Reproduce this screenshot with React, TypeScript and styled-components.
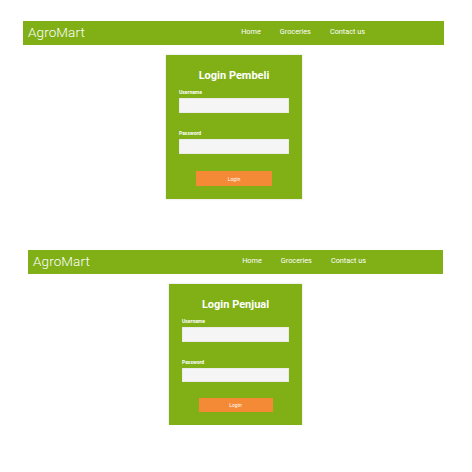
import React from 'react'
import styled, { createGlobalStyle } from 'styled-components'

const GlobalStyle = createGlobalStyle`
  html, body {
    margin: 0;
    padding: 0;
    background: #ffffff;
    font-family: Roboto, "Liberation Sans", sans-serif;
  }
`

const Page = styled.div`
  display: flex;
  flex-direction: column;
  padding-top: 21px;
`

const Section = styled.section<{ offset: number; navWidth: number }>`
  display: flex;
  flex-direction: column;
  margin-left: ${({ offset }) => offset}px;
  width: ${({ navWidth }) => navWidth}px;
  & + & {
    margin-top: 51px;
  }
`

const Nav = styled.nav`
  display: flex;
  align-items: center;
  height: 24px;
  background-color: #80b016;
  padding-left: 5px;
`

const Brand = styled.div`
  color: #ffffff;
  font-size: 13.5px;
  font-weight: 300;
  letter-spacing: 0.1px;
  margin-bottom: 2px;
`

const Links = styled.ul<{ right: number }>`
  display: flex;
  gap: 19px;
  list-style: none;
  margin: 0 ${({ right }) => right}px 4px auto;
  padding: 0;
`

const LinkItem = styled.li`
  color: #ffffff;
  font-size: 7.3px;
  font-weight: 400;
`

const Card = styled.form<{ width: number; indent: number }>`
  display: flex;
  flex-direction: column;
  width: ${({ width }) => width}px;
  margin: 10px 0 0 ${({ indent }) => indent}px;
  padding: 14px 13px 13px;
  box-sizing: border-box;
  background-color: #80b016;
  box-shadow: 0 0 2px rgba(0, 0, 0, 0.18);
`

const Title = styled.h2`
  margin: 0 0 6px;
  text-align: center;
  color: #ffffff;
  font-family: Roboto, "Liberation Sans", sans-serif;
  font-size: 11px;
  line-height: 14px;
  font-weight: 700;
`

const Field = styled.div`
  display: flex;
  flex-direction: column;
  & + & {
    margin-top: 17px;
  }
`

const Label = styled.label`
  color: #ffffff;
  font-size: 5px;
  line-height: 6px;
  font-weight: 700;
  margin-bottom: 3px;
`

const Input = styled.input<{ tight: boolean }>`
  height: ${({ tight }) => (tight ? 14.5 : 15)}px;
  border: none;
  padding: 0;
  background-color: #f5f5f5;
  box-shadow: inset 0 0 0 0.5px rgba(0, 0, 0, 0.08);
`

const Button = styled.button<{ tight: boolean }>`
  align-self: center;
  width: ${({ tight }) => (tight ? 74 : 76)}px;
  height: ${({ tight }) => (tight ? 14 : 15)}px;
  margin-top: ${({ tight }) => (tight ? 16 : 17)}px;
  border: none;
  padding: 0;
  background-color: #f58a36;
  color: #ffffff;
  font-family: Roboto, "Liberation Sans", sans-serif;
  font-size: 5px;
`

const LoginBlock: React.FC<{
  title: string
  offset: number
  navWidth: number
  linksRight: number
  cardWidth: number
  cardIndent: number
  tight?: boolean
}> = ({ title, offset, navWidth, linksRight, cardWidth, cardIndent, tight = false }) => (
  <Section offset={offset} navWidth={navWidth}>
    <Nav>
      <Brand>AgroMart</Brand>
      <Links right={linksRight}>
        <LinkItem>Home</LinkItem>
        <LinkItem>Groceries</LinkItem>
        <LinkItem>Contact us</LinkItem>
      </Links>
    </Nav>
    <Card width={cardWidth} indent={cardIndent} onSubmit={e => e.preventDefault()}>
      <Title>{title}</Title>
      <Field>
        <Label>Username</Label>
        <Input tight={tight} type='text' />
      </Field>
      <Field>
        <Label>Password</Label>
        <Input tight={tight} type='password' />
      </Field>
      <Button tight={tight} type='submit'>Login</Button>
    </Card>
  </Section>
)

const App: React.FC = () => (
  <>
    <GlobalStyle />
    <Page>
      <LoginBlock title='Login Pembeli' offset={23} navWidth={421} linksRight={79} cardWidth={136} cardIndent={143} />
      <LoginBlock title='Login Penjual' offset={28} navWidth={415} linksRight={77} cardWidth={133} cardIndent={141} tight />
    </Page>
  </>
)

export default App
